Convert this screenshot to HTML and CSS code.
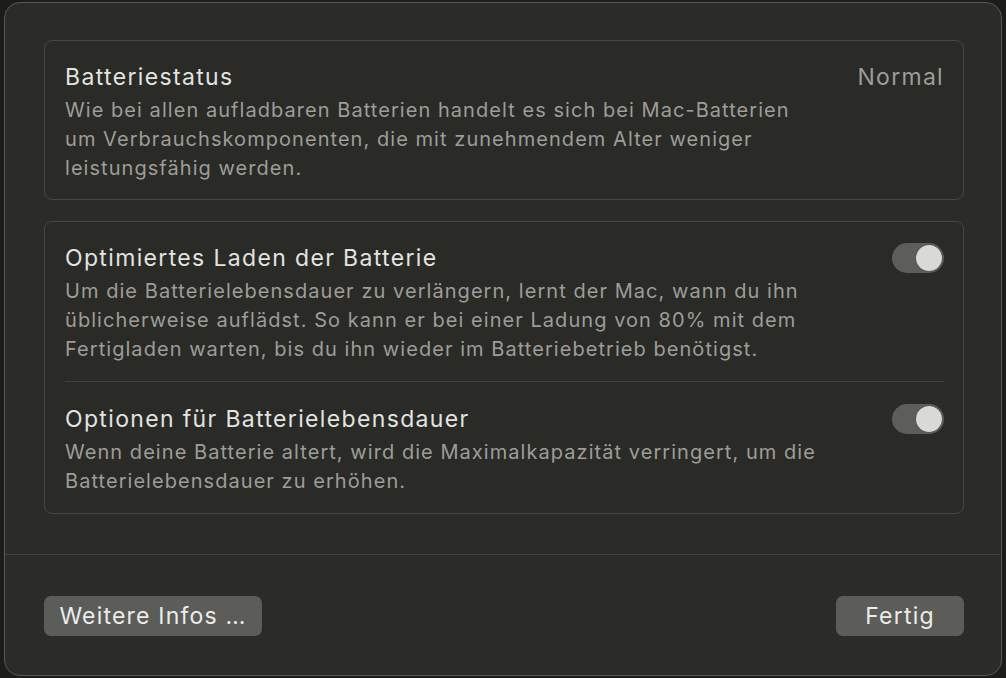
FILE: index.html
```html
<!DOCTYPE html>
<html lang="de">
<head>
    <meta charset="UTF-8">
    <meta name="viewport" content="width=device-width, initial-scale=1.0">
    <title>Batterie</title>
    <link rel="stylesheet" href="styles.css">
</head>
<body>
    <div class="window">
        <div class="content">
            <div class="card">
                <div class="row">
                    <div class="text">
                        <div class="title">Batteriestatus</div>
                        <div class="desc">Wie bei allen aufladbaren Batterien handelt es sich bei Mac-Batterien<br>um Verbrauchskomponenten, die mit zunehmendem Alter weniger<br>leistungsfähig werden.</div>
                    </div>
                    <div class="value">Normal</div>
                </div>
            </div>

            <div class="card">
                <div class="row">
                    <div class="text">
                        <div class="title">Optimiertes Laden der Batterie</div>
                        <div class="desc">Um die Batterielebensdauer zu verlängern, lernt der Mac, wann du ihn<br>üblicherweise auflädst. So kann er bei einer Ladung von 80% mit dem<br>Fertigladen warten, bis du ihn wieder im Batteriebetrieb benötigst.</div>
                    </div>
                    <div class="switch"><span class="knob"></span></div>
                </div>
                <div class="divider"></div>
                <div class="row">
                    <div class="text">
                        <div class="title">Optionen für Batterielebensdauer</div>
                        <div class="desc">Wenn deine Batterie altert, wird die Maximalkapazität verringert, um die<br>Batterielebensdauer zu erhöhen.</div>
                    </div>
                    <div class="switch"><span class="knob"></span></div>
                </div>
            </div>
        </div>

        <div class="footer">
            <button class="btn btn-info">Weitere Infos …</button>
            <button class="btn btn-done">Fertig</button>
        </div>
    </div>
</body>
</html>
```

FILE: styles.css
```css
html, body {
    margin: 0;
    padding: 0;
}
body {
    background: #1c1c1b;
    font-family: Inter, "Noto Sans", sans-serif;
    width: 1006px;
    height: 678px;
    overflow: hidden;
}
.window {
    margin: 2px 4px 0 4px;
    width: 998px;
    height: 674px;
    box-sizing: border-box;
    border: 1px solid #575755;
    border-radius: 16px;
    background: #2b2b27;
    display: flex;
    flex-direction: column;
}
.content {
    padding: 37px 37px 40px 39px;
    display: flex;
    flex-direction: column;
    gap: 21px;
    border-bottom: 1px solid #434340;
}
.card {
    border: 1px solid #464643;
    border-radius: 8px;
    background: #2a2a26;
    padding: 0 19px 0 20px;
}
.row {
    display: flex;
    justify-content: space-between;
    align-items: flex-start;
    padding: 21px 0 17px 0;
}
.card:first-child .row {
    padding-bottom: 16px;
}
.divider + .row {
    padding-top: 22px;
    padding-bottom: 17px;
}
.title {
    font-size: 23px;
    line-height: 30px;
    letter-spacing: 1.35px;
    color: #e3e3e1;
    margin-bottom: 4px;
}
.desc {
    font-size: 20px;
    line-height: 29px;
    letter-spacing: 1.05px;
    color: #9d9d9a;
}
.value {
    font-size: 23px;
    line-height: 30px;
    letter-spacing: 1.3px;
    color: #9d9d9a;
}
.divider {
    height: 1px;
    background: #41413e;
}
.switch {
    width: 52px;
    height: 30px;
    box-sizing: border-box;
    border-radius: 15px;
    background: #5d5d5a;
    position: relative;
    flex-shrink: 0;
}
.knob {
    position: absolute;
    top: 2px;
    right: 2px;
    width: 26px;
    height: 26px;
    border-radius: 50%;
    background: #d9d9d8;
    box-shadow: 0 0 1px rgba(0, 0, 0, 0.5);
}
.footer {
    display: flex;
    justify-content: space-between;
    padding: 41px 37px 0 39px;
}
.btn {
    height: 40px;
    border: none;
    border-radius: 7px;
    background: #5c5c59;
    color: #ececea;
    font-family: Inter, "Noto Sans", sans-serif;
    font-size: 23px;
    letter-spacing: 1.2px;
    padding: 0 8px;
}
.btn-info {
    width: 218px;
}
.btn-done {
    width: 128px;
}
```
